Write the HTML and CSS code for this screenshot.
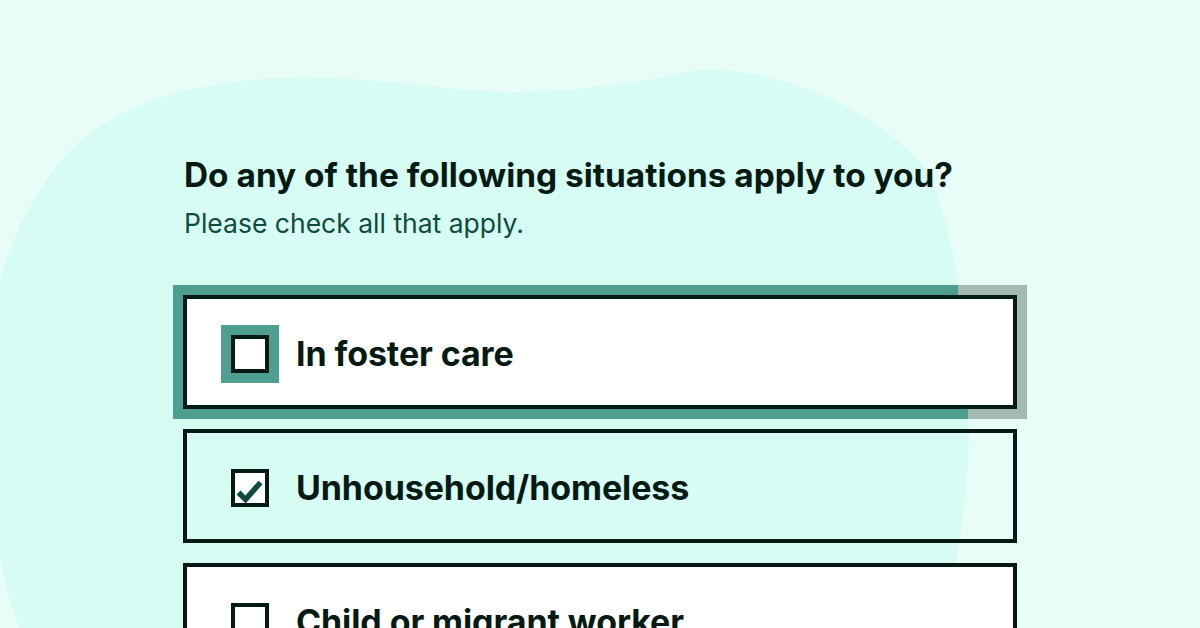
FILE: index.html
```html
<!DOCTYPE html>
<html lang="en">
<head>
<meta charset="utf-8">
<title>Situations</title>
<link rel="stylesheet" href="styles.css">
</head>
<body>
<svg class="blob" width="1200" height="628" viewBox="0 0 1200 628" aria-hidden="true">
  <path d="M 20 628 C -10 560 -20 420 0 280 C 12 235 35 190 70 150 C 120 100 200 80 290 78 C 380 76 450 92 510 92 C 570 92 620 84 660 78 C 690 70 710 68 740 72 C 800 80 870 110 918 160 C 950 200 965 300 969 419 C 970 500 955 570 942 628 Z" fill="#d6fcf3"/>
</svg>
<main class="page">
  <h1 class="title">Do any of the following situations apply to you?</h1>
  <p class="subtitle">Please check all that apply.</p>
  <div class="options">
    <div class="focus-ring">
      <label class="option option-white">
        <span class="box box-focus"></span>
        <span class="option-label">In foster care</span>
      </label>
    </div>
    <label class="option option-clear">
      <span class="box">
        <svg class="check" width="30" height="30" viewBox="0 0 30 30" aria-hidden="true">
          <polyline points="3.5,19.5 10.5,26.5 25.5,9.5" fill="none" stroke="#0e4a3e" stroke-width="5.5"/>
        </svg>
      </span>
      <span class="option-label">Unhousehold/homeless</span>
    </label>
    <label class="option option-white">
      <span class="box"></span>
      <span class="option-label">Child or migrant worker</span>
    </label>
  </div>
</main>
</body>
</html>
```

FILE: styles.css
```css
html, body {
  margin: 0;
  padding: 0;
}

body {
  width: 1200px;
  height: 628px;
  overflow: hidden;
  background: #e8fdf7;
  font-family: "Inter", "Noto Sans", "Liberation Sans", sans-serif;
  color: #061a14;
  position: relative;
}

.blob {
  position: absolute;
  left: 0;
  top: 0;
  z-index: 0;
}

.page {
  position: relative;
  z-index: 1;
  width: 834px;
  margin-left: 183px;
  padding-top: 155px;
}

.title {
  margin: 0 0 0 1px;
  font-size: 33.4px;
  line-height: 40px;
  font-weight: 700;
  letter-spacing: 0;
}

.subtitle {
  margin: 12px 0 0 1px;
  font-size: 26.5px;
  line-height: 32px;
  font-weight: 400;
  color: #0d4b3f;
  letter-spacing: 0;
}

.options {
  margin-top: 56px;
  display: flex;
  flex-direction: column;
  gap: 20px;
}

.focus-ring {
  margin: -10px;
  padding: 10px;
  background: linear-gradient(85.5deg, #4f9e92 792.8px, #a5b9b3 792.8px);
}

.option {
  box-sizing: border-box;
  height: 114px;
  border: 4px solid #061a14;
  display: flex;
  align-items: center;
  padding: 4px 0 0 44px;
  gap: 27px;
}

.option-white {
  background: #ffffff;
}

.option-clear {
  background: transparent;
}

.box {
  box-sizing: border-box;
  width: 38px;
  height: 38px;
  border: 4px solid #061a14;
  background: #ffffff;
  flex: none;
  display: flex;
}

.box-focus {
  box-shadow: 0 0 0 10px #4f9e92;
}

.check {
  display: block;
}

.option-label {
  font-size: 34px;
  line-height: 40px;
  font-weight: 700;
  letter-spacing: -0.1px;
}
```
